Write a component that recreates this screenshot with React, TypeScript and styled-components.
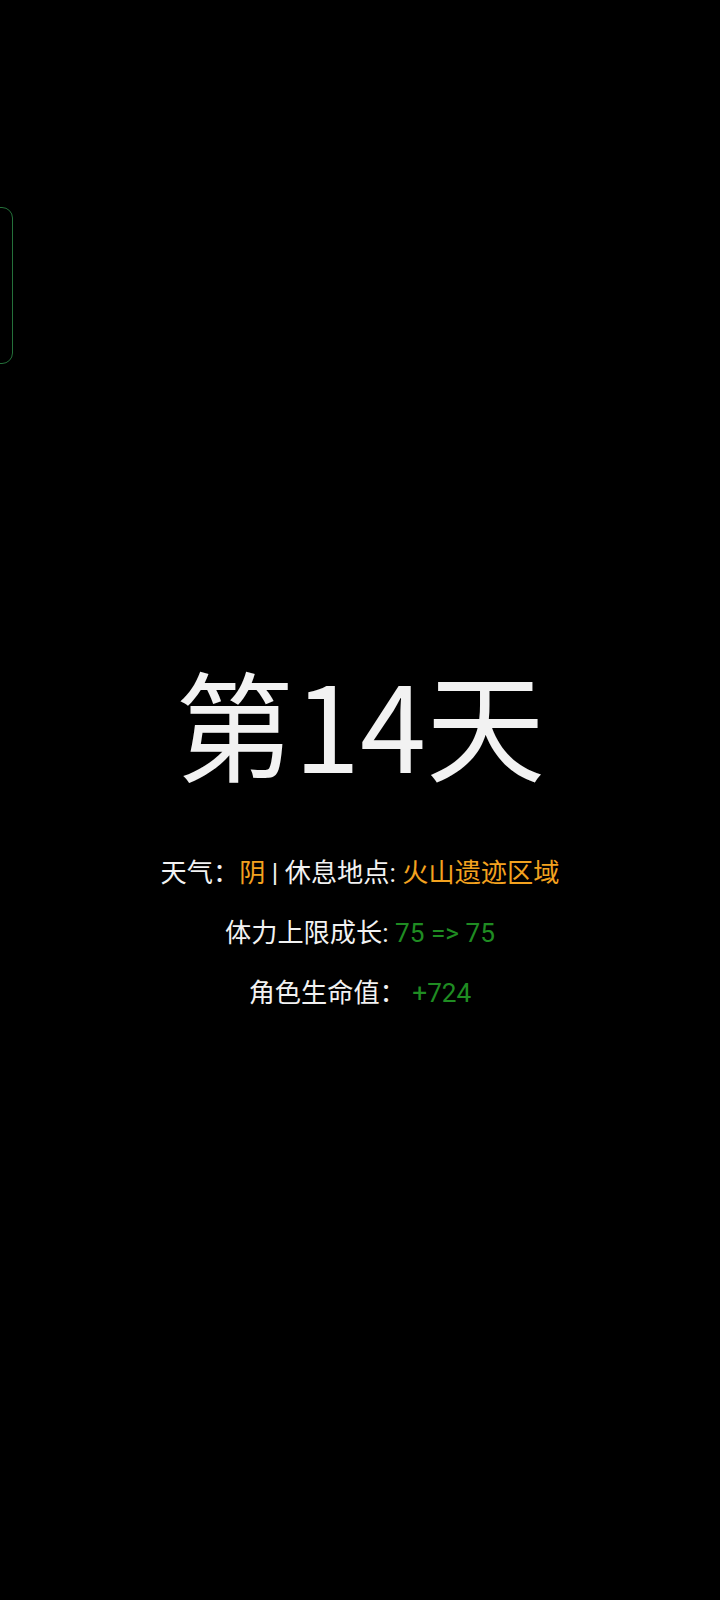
import React from 'react';
import styled, { createGlobalStyle } from 'styled-components';

const GlobalStyle = createGlobalStyle`
    html, body {
        margin: 0;
        padding: 0;
        background: #000;
    }
    body {
        font-family: Roboto, "Noto Sans CJK SC", sans-serif;
    }
`;

const Page = styled.div`
    position: relative;
    min-height: 1600px;
    background: #000;
    color: #f2f2f2;
    display: flex;
    flex-direction: column;
    align-items: center;
    padding-top: 651px;
    box-sizing: border-box;
`;

const DrawerHandle = styled.div`
    position: absolute;
    left: -21px;
    top: 207px;
    width: 34px;
    height: 157px;
    border: 1px solid #24703a;
    border-radius: 11px;
    box-sizing: border-box;
`;

const DayTitle = styled.h1`
    margin: 0 0 51px 0;
    font-family: "Noto Sans CJK SC", sans-serif;
    font-weight: 400;
    font-size: 119px;
    line-height: 141px;
    color: #f2f2f2;
`;

const InfoLine = styled.div`
    font-size: 26.2px;
    line-height: 60px;
    color: #f2f2f2;
    white-space: pre;
`;

const Value = styled.span<{ tone: 'orange' | 'green' }>`
    color: ${({ tone }) => (tone === 'orange' ? '#f3a21f' : '#1f8c22')};
`;

const App = () => {
    return (
        <>
            <GlobalStyle />
            <Page>
                <DrawerHandle />
                <DayTitle>第14天</DayTitle>
                <InfoLine>
                    天气：<Value tone="orange">阴</Value> | 休息地点: <Value tone="orange">火山遗迹区域</Value>
                </InfoLine>
                <InfoLine>
                    体力上限成长: <Value tone="green">75 =&gt; 75</Value>
                </InfoLine>
                <InfoLine>
                    角色生命值： <Value tone="green">+724</Value>
                </InfoLine>
            </Page>
        </>
    );
};

export default App;
